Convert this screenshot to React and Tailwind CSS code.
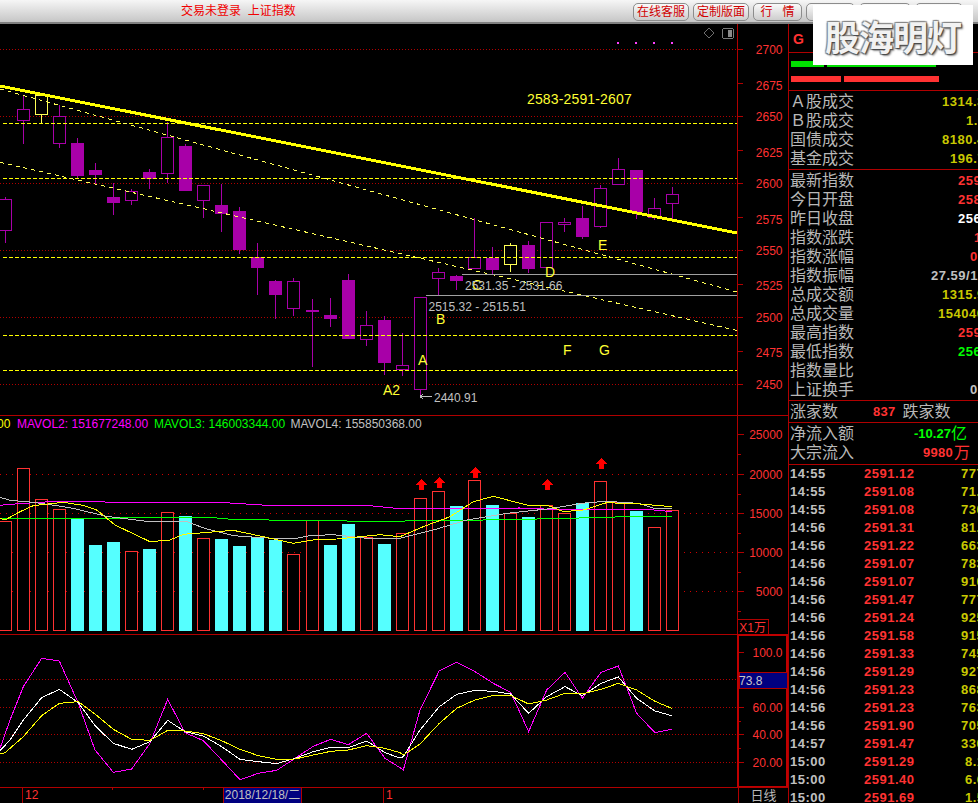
const CJK = `font-['Liberation_Sans','Noto_Sans_CJK_SC',sans-serif]`;

const RED = "#ff3232";
const LINE = "#b00000";
const PURPLE = "#a800a8";

// [index, bodyTop, bodyBottom, wickTop, wickLow, kind] h = hollow, f = filled, y = yellow hollow
const CANDLES = [
    [0, 199, 230, 197, 243, "h"], [1, 109, 120, 96, 144, "h"], [2, 95, 114, 93, 123, "y"],
    [3, 116, 143, 105, 148, "h"], [4, 143, 176, 138, 178, "f"], [5, 170, 175, 163, 184, "f"],
    [6, 197, 203, 183, 215, "f"], [7, 191, 200, 189, 205, "h"], [8, 172, 179, 169, 189, "f"],
    [9, 137, 173, 122, 183, "h"], [10, 146, 191, 144, 191, "f"], [11, 185, 200, 185, 218, "h"],
    [12, 205, 214, 184, 232, "f"], [13, 211, 250, 207, 254, "f"], [14, 257, 268, 243, 295, "f"],
    [15, 281, 295, 280, 319, "f"], [16, 281, 308, 278, 316, "h"], [17, 310, 312, 299, 367, "f"],
    [18, 315, 319, 298, 327, "f"], [19, 280, 339, 274, 339, "f"], [20, 325, 339, 311, 346, "h"],
    [21, 320, 363, 316, 375, "f"], [22, 365, 369, 333, 376, "h"], [23, 297, 389, 297, 396, "h"],
    [24, 272, 278, 268, 295, "h"], [25, 276, 281, 275, 290, "f"], [26, 257, 268, 218, 268, "h"],
    [27, 258, 270, 247, 274, "f"], [28, 245, 264, 243, 272, "y"], [29, 245, 269, 241, 273, "f"],
    [30, 222, 267, 222, 267, "h"], [31, 222, 224, 218, 232, "h"], [32, 218, 237, 206, 239, "f"],
    [33, 188, 226, 185, 228, "h"], [34, 169, 184, 158, 184, "h"], [35, 170, 212, 170, 219, "f"],
    [36, 208, 217, 198, 220, "h"], [37, 194, 203, 187, 222, "h"],
];

// [top, filled]
const VOLUMES = [
    [521, 0], [468, 0], [499, 0], [509, 0], [519, 1], [545, 1], [542, 1], [551, 0], [549, 1], [512, 0],
    [516, 1], [538, 0], [539, 1], [546, 1], [537, 1], [540, 1], [554, 0], [520, 0], [545, 1], [524, 1],
    [537, 0], [544, 1], [533, 0], [498, 0], [491, 0], [506, 1], [480, 0], [505, 1], [513, 0], [517, 1],
    [505, 0], [513, 0], [503, 1], [481, 0], [502, 0], [511, 1], [527, 0], [510, 0],
];

const cx = (i) => Math.floor(5.5 + 18.03 * i) + 0.5;

// curves read off at 3x: left part starts at x=0, right part at x=400
const curve = (oy, left, right) =>
    [...left.map(([x, y]) => `${x / 3},${y / 3 + oy}`), ...right.map(([x, y]) => `${x / 3 + 400},${y / 3 + oy}`)].join(" ");

const MA_MAGENTA = curve(410,
    [[0, 286], [30, 283], [150, 275], [315, 276], [470, 277], [690, 279], [800, 286], [1110, 287], [1200, 296]],
    [[360, 294], [500, 300], [570, 298], [740, 298], [815, 305]]);
const MA_GREEN = curve(410,
    [[0, 326], [95, 325], [640, 323], [695, 328], [860, 331], [1130, 334], [1200, 335]],
    [[33, 331], [250, 330], [465, 326], [575, 323], [680, 320], [815, 319]]);
const MA_GRAY = curve(410,
    [[0, 262], [30, 271], [100, 277], [210, 293], [320, 319], [440, 334], [560, 335], [620, 357], [700, 377], [800, 384], [890, 385], [930, 377], [1000, 374], [1100, 385], [1200, 385]],
    [[100, 360], [200, 330], [320, 310], [450, 296], [560, 278], [620, 274], [715, 280], [760, 294], [815, 294]]);
const MA_YELLOW = curve(410,
    [[0, 325], [15, 330], [60, 305], [100, 287], [190, 277], [250, 286], [290, 300], [345, 345], [450, 395], [510, 390], [550, 373], [700, 361], [780, 378], [880, 400], [950, 388], [1010, 387], [1140, 374], [1200, 380]],
    [[70, 350], [150, 320], [220, 275], [280, 259], [380, 285], [440, 285], [490, 305], [550, 300], [620, 278], [720, 282], [815, 290]]);

const KDJ_MAGENTA = curve(630,
    [[0, 355], [30, 270], [70, 170], [125, 85], [178, 93], [235, 220], [285, 360], [340, 427], [395, 417], [450, 340], [503, 208], [555, 308], [610, 332], [665, 390], [720, 449], [775, 430], [830, 421], [885, 385], [940, 349], [992, 328], [1045, 344], [1100, 310], [1155, 385], [1200, 413]],
    [[10, 420], [60, 240], [118, 122], [170, 97], [225, 125], [280, 160], [332, 187], [386, 305], [440, 180], [495, 127], [547, 205], [603, 127], [655, 108], [710, 250], [765, 308], [815, 298]]);
const KDJ_WHITE = curve(630,
    [[0, 362], [30, 330], [70, 270], [125, 203], [178, 178], [235, 218], [285, 287], [340, 340], [395, 358], [450, 335], [503, 271], [555, 305], [610, 318], [665, 350], [720, 388], [775, 395], [830, 401], [885, 385], [940, 365], [992, 352], [1045, 353], [1100, 333], [1155, 368], [1200, 384]],
    [[10, 380], [60, 300], [118, 230], [170, 193], [225, 181], [280, 184], [332, 192], [386, 250], [440, 200], [495, 170], [547, 197], [603, 160], [655, 141], [710, 205], [765, 243], [815, 257]]);
const KDJ_YELLOW = curve(630,
    [[0, 372], [15, 368], [70, 320], [125, 257], [178, 220], [235, 215], [285, 252], [340, 298], [395, 328], [450, 331], [503, 301], [555, 303], [610, 311], [665, 332], [720, 358], [775, 377], [830, 388], [885, 387], [940, 375], [992, 364], [1045, 360], [1100, 347], [1155, 355], [1200, 368]],
    [[10, 375], [60, 342], [118, 280], [170, 235], [225, 210], [280, 196], [332, 196], [386, 222], [440, 210], [495, 190], [547, 192], [603, 178], [655, 160], [710, 180], [765, 214], [815, 235]]);

const PRICE_LABELS = [
    ["2700", 49.5], ["2675", 85], ["2650", 116.5], ["2625", 152], ["2600", 183], ["2575", 219.5],
    ["2550", 250.5], ["2525", 285.5], ["2500", 317.5], ["2475", 352.5], ["2450", 384.5],
];
const PRICE_TICKS = [49.5, 83.5, 116.5, 150.5, 183.5, 217.5, 250.5, 284.5, 317.5, 351.5, 384.5];

const SUMMARY_A = [
    ["Ａ股成交", "1314.32", "ml-[88px] text-[#c8c800]"],
    ["Ｂ股成交", "1.68", "ml-[112px] text-[#c8c800]"],
    ["国债成交", "8180.44", "ml-[88px] text-[#c8c800]"],
    ["基金成交", "196.72", "ml-[96px] text-[#c8c800]"],
];
const SUMMARY_B = [
    ["最新指数", "2591.69", "ml-[104px] text-[#ff3232]"],
    ["今日开盘", "2583.21", "ml-[104px] text-[#ff3232]"],
    ["昨日收盘", "2568.05", "ml-[104px] text-white"],
    ["指数涨跌", "16.09", "ml-[120px] text-[#ff3232]"],
    ["指数涨幅", "0.39%", "ml-[116px] text-[#ff3232]"],
    ["指数振幅", "27.59/1.07%", "ml-[77px] text-[#c0c0c0]"],
    ["总成交额", "1315.92", "ml-[88px] text-[#c8c800]"],
    ["总成交量", "154040", "ml-[84px] text-[#c8c800]"],
    ["最高指数", "2597.33", "ml-[104px] text-[#ff3232]"],
    ["最低指数", "2569.74", "ml-[104px] text-[#00ff00]"],
    ["指数量比", "", ""],
    ["上证换手", "0.95", "ml-[116px] text-[#c0c0c0]"],
];
const TICKS = [
    ["14:55", "2591.12", "777"], ["14:55", "2591.08", "71."], ["14:55", "2591.08", "730"], ["14:56", "2591.31", "81."],
    ["14:56", "2591.22", "663"], ["14:56", "2591.07", "783"], ["14:56", "2591.07", "910"], ["14:56", "2591.47", "777"],
    ["14:56", "2591.24", "925"], ["14:56", "2591.58", "915"], ["14:56", "2591.33", "745"], ["14:56", "2591.29", "927"],
    ["14:56", "2591.23", "868"], ["14:56", "2591.23", "763"], ["14:56", "2591.90", "705"], ["14:57", "2591.47", "330"],
    ["15:00", "2591.29", "8.1"], ["15:00", "2591.40", "6.6"], ["15:00", "2591.69", "1.5"],
];

function Button({ label, w }) {
    return (
        <div className={`${w} h-[18px] flex items-center justify-center whitespace-pre rounded-[5px] border border-[#8c8c8c] bg-linear-to-b from-[#fafafa] to-[#cdcdcd] text-[12px] text-[#d00000]`}>
            {label}
        </div>
    );
}

function MainPane() {
    return (
        <svg className="w-[788px] h-[391px]" viewBox="0 24 788 391" fontFamily="'Liberation Sans', sans-serif">
            <g shapeRendering="crispEdges">
                {[49.5, 116.5, 183.5, 250.5, 317.5, 384.5].map((y) => (
                    <line key={y} x1="0" x2="738" y1={y} y2={y} stroke="#b00000" strokeDasharray="1 2" />
                ))}
                {CANDLES.map(([i, top, bottom, wt, wl, kind]) => {
                    const x = cx(i);
                    const color = kind === "y" ? "#ffff55" : PURPLE;
                    return (
                        <g key={i}>
                            <line x1={x} x2={x} y1={wt} y2={wl} stroke={color} />
                            {kind === "f" ? (
                                <rect x={x - 6.5} y={top} width="13" height={bottom - top} fill={color} />
                            ) : (
                                <rect x={x - 6} y={top + 0.5} width="12" height={bottom - top} fill="#000" stroke={color} />
                            )}
                        </g>
                    );
                })}
                {[123.5, 178.5, 257.5, 335.5, 370.5].map((y) => (
                    <line key={y} x1="3" x2="738" y1={y} y2={y} stroke="#ffff00" strokeDasharray="4 2" />
                ))}
                <line x1="0" y1="89" x2="737" y2="292" stroke="#ffff55" strokeDasharray="4 4" />
                <line x1="0" y1="162.3" x2="737" y2="330.5" stroke="#ffff55" strokeDasharray="4 4" />
                <line x1="0" y1="86" x2="737" y2="233" stroke="#ffff00" strokeWidth="3" />
                <line x1="462" x2="738" y1="274.5" y2="274.5" stroke="#a0a0a0" />
                <line x1="426" x2="738" y1="295.5" y2="295.5" stroke="#a0a0a0" />
                {[618, 636, 654, 672].map((x) => (
                    <rect key={x} x={x - 1} y="42" width="2" height="2" fill="#ff40ff" />
                ))}
                <line x1="737.5" x2="737.5" y1="24" y2="415" stroke={LINE} />
                {PRICE_TICKS.map((y) => (
                    <line key={y} x1="738" x2="743" y1={y} y2={y} stroke={LINE} />
                ))}
                <polygon points="709,28 714,33 709,38 704,33" fill="none" stroke="#6e6e6e" />
                <rect x="722.5" y="28.5" width="11" height="10" rx="2" fill="none" stroke="#7a7a7a" />
                <rect x="728" y="30" width="4" height="7" fill="#8a8a8a" />
                <path d="M420 396.5H432M420 396.5l3 -2.5M420 396.5l3 2.5" stroke="#c0c0c0" fill="none" />
            </g>
            <g fill="#ffff33" fontSize="14">
                <text x="527" y="104" letterSpacing="0.15">2583-2591-2607</text>
                <text x="418" y="365">A</text>
                <text x="383" y="395">A2</text>
                <text x="436" y="324">B</text>
                <text x="472" y="290">C</text>
                <text x="545" y="277">D</text>
                <text x="598" y="250">E</text>
                <text x="563" y="355">F</text>
                <text x="599" y="355">G</text>
            </g>
            <g fill="#c0c0c0" fontSize="12">
                <text x="465" y="289.5">2531.35 - 2531.66</text>
                <text x="428.5" y="310.5">2515.32 - 2515.51</text>
                <text x="434" y="401.5">2440.91</text>
            </g>
            <g fill={RED} fontSize="12" textAnchor="end">
                {PRICE_LABELS.map(([t, y]) => (
                    <text key={t} x="782.5" y={y + 4.5}>{t}</text>
                ))}
            </g>
        </svg>
    );
}

function VolumePane() {
    return (
        <svg className="w-[788px] h-[219px]" viewBox="0 415 788 219" fontFamily="'Liberation Sans', 'Noto Sans CJK SC', sans-serif">
            <g shapeRendering="crispEdges">
                <line x1="0" x2="788" y1="415.5" y2="415.5" stroke={LINE} />
                {[474.5, 513.5, 552.5, 591.5].map((y) => (
                    <line key={y} x1="0" x2="738" y1={y} y2={y} stroke="#d00000" strokeDasharray="1 5" />
                ))}
                {VOLUMES.map(([top, filled], i) => {
                    const x = cx(i);
                    return filled ? (
                        <rect key={i} x={x - 6.5} y={top} width="13" height={631 - top} fill="#55ffff" />
                    ) : (
                        <rect key={i} x={x - 6} y={top + 0.5} width="12" height={630 - top} fill="#000" stroke={RED} />
                    );
                })}
                {[[MA_MAGENTA, "#ff00ff"], [MA_GREEN, "#00ff00"], [MA_GRAY, "#c0c0c0"], [MA_YELLOW, "#ffff00"]].map(([p, c]) => (
                    <polyline key={c} points={p} fill="none" stroke={c} />
                ))}
                {[[421, 479], [439, 477], [475, 467], [547, 479], [601, 458]].map(([x, y]) => (
                    <polygon key={x} points={`${x},${y} ${x + 5.5},${y + 5.5} ${x + 2.5},${y + 5.5} ${x + 2.5},${y + 11} ${x - 2.5},${y + 11} ${x - 2.5},${y + 5.5} ${x - 5.5},${y + 5.5}`} fill="#ff0000" />
                ))}
                <line x1="737.5" x2="737.5" y1="415" y2="634" stroke={LINE} />
                {[434.5, 474.5, 513.5, 552.5, 591.5].map((y) => (
                    <line key={y} x1="738" x2="744" y1={y} y2={y} stroke={LINE} />
                ))}
                {[454.5, 494.5, 533.5, 572.5, 611.5].map((y) => (
                    <line key={y} x1="738" x2="741" y1={y} y2={y} stroke={LINE} />
                ))}
                <rect x="737.5" y="619.5" width="31" height="15" fill="#000" stroke={LINE} />
            </g>
            <g fontSize="12">
                <text x="-3" y="427.5" fill="#ffff00">00</text>
                <text x="17" y="427.5" fill="#ff00ff">MAVOL2: 151677248.00</text>
                <text x="154" y="427.5" fill="#00ff00">MAVOL3: 146003344.00</text>
                <text x="290.5" y="427.5" fill="#c0c0c0">MAVOL4: 155850368.00</text>
            </g>
            <g fill={RED} fontSize="12" textAnchor="end">
                {[["25000", 434.5], ["20000", 474.5], ["15000", 513.5], ["10000", 552.5], ["5000", 591.5]].map(([t, y]) => (
                    <text key={t} x="782.5" y={y + 4.5}>{t}</text>
                ))}
                <text x="766" y="631.5" fill={RED}>X1万</text>
            </g>
        </svg>
    );
}

function KdjPane() {
    return (
        <svg className="w-[788px] h-[153px]" viewBox="0 634 788 153" fontFamily="'Liberation Sans', sans-serif">
            <g shapeRendering="crispEdges">
                <line x1="0" x2="738" y1="634.5" y2="634.5" stroke={LINE} />
                {[679.5, 707.5, 734.5, 762.5].map((y) => (
                    <line key={y} x1="0" x2="738" y1={y} y2={y} stroke="#b00000" strokeDasharray="1 2" />
                ))}
                <polyline points={KDJ_MAGENTA} fill="none" stroke="#ff00ff" />
                <polyline points={KDJ_WHITE} fill="none" stroke="#ffffff" />
                <polyline points={KDJ_YELLOW} fill="none" stroke="#ffff00" />
                <rect x="738" y="635" width="49" height="152" fill="none" stroke="#c00000" strokeWidth="2" />
                {[652.5, 707.5, 734.5, 762.5].map((y) => (
                    <line key={y} x1="739" x2="744" y1={y} y2={y} stroke={LINE} />
                ))}
                {[679.5, 721.5, 748.5].map((y) => (
                    <line key={y} x1="739" x2="741" y1={y} y2={y} stroke={LINE} />
                ))}
                <rect x="739" y="672.5" width="48" height="15.5" fill="#000080" stroke={LINE} />
            </g>
            <text x="739" y="684.5" fontSize="12" fill="#c8c8c8">73.8</text>
            <g fill={RED} fontSize="12" textAnchor="end">
                {[["100.0", 652.5], ["60.00", 707.5], ["40.00", 734.5], ["20.00", 762.5]].map(([t, y]) => (
                    <text key={t} x="782.5" y={y + 4.5}>{t}</text>
                ))}
            </g>
        </svg>
    );
}

function DateBar() {
    return (
        <div className="relative flex h-4 border-t border-[#b00000] text-[12px] leading-[15px]">
            <div className="w-[22px]" />
            <div className="w-[201px] border-l border-[#b00000] pl-[2px] text-[#ff3232]">12</div>
            <div className="w-[79px] border-x border-[#b00000] bg-[#000080] text-center text-[#c0c0c0] whitespace-nowrap">2018/12/18/二</div>
            <div className="w-[81px]" />
            <div className="w-[355px] border-l border-[#b00000] pl-[2px] text-[#ff3232]">1</div>
            <div className="w-[50px] border-l border-[#b00000] text-center text-[13px] text-[#b8b8b8]">日线</div>
            <div className="absolute left-[112px] top-0 h-[2px] w-px bg-[#b00000]" />
            <div className="absolute left-[203px] top-0 h-[2px] w-px bg-[#b00000]" />
        </div>
    );
}

function SummaryRow({ label, value, cls }) {
    return (
        <div className="flex h-[19px] items-center whitespace-nowrap pl-px">
            <span className="w-16 shrink-0 text-[16px] leading-[19px] text-[#b8b8b8]">{label}</span>
            <span className={`shrink-0 text-[13px] font-bold tracking-[0.5px] ${cls}`}>{value}</span>
        </div>
    );
}

function SidePanel() {
    return (
        <div className="w-[190px] h-[779px] overflow-hidden border-l border-[#b00000]">
            <div className="h-[29px] flex items-center gap-[9px] border-b border-[#b00000] pl-1 pt-[2px]">
                <span className="text-[14px] font-bold text-[#ff3232]">G</span>
                <span className="text-[13px] text-[#00c800]">±</span>
            </div>
            <div className="h-[38px] border-b border-[#b00000] pl-[2px] pt-2">
                <div className="flex gap-[3px]">
                    <div className="h-[6px] w-[33px] bg-[#00e000]" />
                    <div className="h-[6px] w-[109px] bg-[#00e000]" />
                </div>
                <div className="mt-[9px] flex gap-[3px]">
                    <div className="h-[6px] w-[50px] bg-[#ff3232]" />
                    <div className="h-[6px] w-[95px] bg-[#ff3232]" />
                </div>
            </div>
            <div className="h-[79px] border-b border-[#b00000] pt-px">
                {SUMMARY_A.map(([l, v, c]) => <SummaryRow key={l} label={l} value={v} cls={c} />)}
            </div>
            <div className="h-[231px] border-b border-[#b00000] pt-px">
                {SUMMARY_B.map(([l, v, c]) => <SummaryRow key={l} label={l} value={v} cls={c} />)}
            </div>
            <div className="flex h-[22px] items-center whitespace-nowrap border-b border-[#b00000] pl-px text-[16px] text-[#b8b8b8]">
                <span className="w-12 shrink-0">涨家数</span>
                <span className="ml-[35px] shrink-0 text-[13px] font-bold tracking-[0.25px] text-[#ff3232]">837</span>
                <span className="ml-[7px] shrink-0">跌家数</span>
            </div>
            <div className="h-[42px] border-b border-[#b00000] pt-px">
                <div className="flex h-[19px] items-center whitespace-nowrap pl-px text-[16px] text-[#b8b8b8]">
                    <span className="w-16 shrink-0">净流入额</span>
                    <span className="ml-[60px] shrink-0 text-[13px] font-bold text-[#00ff00]">-10.27</span>
                    <span className="text-[#00ff00]">亿</span>
                </div>
                <div className="flex h-[19px] items-center whitespace-nowrap pl-px text-[16px] text-[#b8b8b8]">
                    <span className="w-16 shrink-0">大宗流入</span>
                    <span className="ml-[69px] shrink-0 text-[13px] font-bold tracking-[0.25px] text-[#ff3232]">9980</span>
                    <span className="ml-px text-[#ff3232]">万</span>
                </div>
            </div>
            <div>
                {TICKS.map(([t, p, v], i) => (
                    <div key={i} className="flex h-[18px] items-center whitespace-nowrap pl-px text-[13px] font-bold tracking-[0.5px]">
                        <span className="w-[74px] shrink-0 text-[#c0c0c0]">{t}</span>
                        <span className="w-[97px] shrink-0 text-[#ff3232]">{p}</span>
                        <span className={`shrink-0 text-[#c8c800] ${i > 15 ? "ml-[4px]" : ""}`}>{v}</span>
                    </div>
                ))}
            </div>
        </div>
    );
}

export default function App() {
    return (
        <div className={`relative flex h-[803px] w-[978px] flex-col overflow-hidden bg-black ${CJK}`}>
            <div className="flex h-6 shrink-0 border-b-2 border-[#808080] bg-linear-to-b from-[#f6f6f6] to-[#c6c6c6]">
                <div className="ml-[181px] mt-[3px] whitespace-pre text-[12px] leading-[16px] text-[#f00000]">交易未登录  上证指数</div>
                <div className="ml-auto mr-[15px] mt-[3px] flex items-start gap-[4px]">
                    <Button label="在线客服" w="w-[56px]" />
                    <Button label="定制版面" w="w-[56px]" />
                    <Button label="行   情" w="w-[49px]" />
                    <Button label="" w="w-[49px]" />
                    <Button label="" w="w-[52px]" />
                    <Button label="" w="w-[48px]" />
                </div>
            </div>
            <div className="flex flex-1">
                <div className="w-[788px]">
                    <MainPane />
                    <VolumePane />
                    <KdjPane />
                    <DateBar />
                </div>
                <SidePanel />
            </div>
            {/* watermark pasted over the toolbar */}
            <div className="absolute left-[813px] top-[5px] flex h-[60px] w-[160px] items-center justify-center bg-white pt-[2px] font-['Noto_Sans_CJK_SC',sans-serif] text-[35px] font-bold tracking-[-1px] text-[#f2f2f2] [text-shadow:1px_1px_1px_#444,-1px_-1px_1px_#888,1px_-1px_1px_#888,-1px_1px_1px_#888,2px_2px_2px_#999]">
                股海明灯
            </div>
        </div>
    );
}
